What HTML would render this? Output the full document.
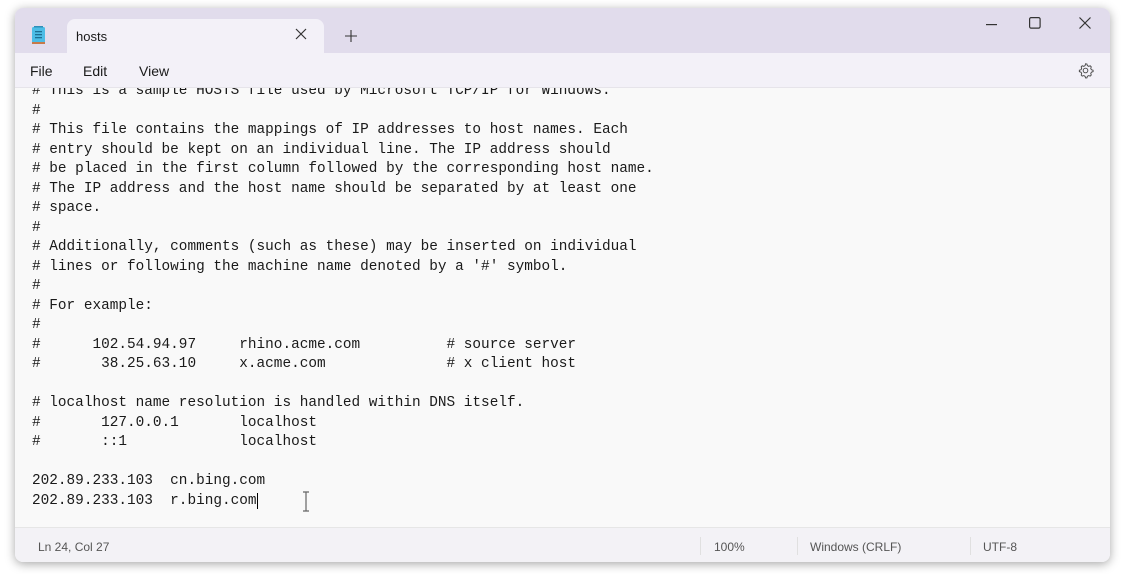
<!DOCTYPE html>
<html><head><meta charset="utf-8"><style>
*{margin:0;padding:0;box-sizing:border-box}
body{width:1121px;height:574px;background:#fff;position:relative;overflow:hidden;font-family:"Liberation Sans",sans-serif}
.win{position:absolute;left:15px;top:8px;width:1095px;height:554px;border-radius:8px;overflow:hidden;box-shadow:0 2px 10px rgba(0,0,0,.35);background:#f9f9f9}
.title{position:absolute;left:0;top:0;width:100%;height:45px;background:#e1dcec}
.tab{position:absolute;left:52px;top:11px;width:257px;height:35px;background:#f3f1f8;border-radius:8px 8px 0 0}
.tab span{position:absolute;left:9px;top:10px;font-size:13px;color:#1a1a1a}
.menu{position:absolute;left:0;top:45px;width:100%;height:35px;background:#f3f1f8;border-bottom:1px solid #e6e4ea}
.menu span{position:absolute;top:10px;font-size:14px;color:#1a1a1a}
.text{position:absolute;left:0;top:80px;width:100%;height:439px;overflow:hidden}
pre{position:absolute;left:17px;top:-6px;font-family:"Liberation Mono",monospace;font-size:14.4px;line-height:19.5px;color:#1a1a1a}
.status{position:absolute;left:0;top:519px;width:100%;height:35px;background:#f3f2f6;border-top:1px solid #e6e6e6;font-size:12px;color:#555}
.status span{position:absolute;top:12px}
.sep{position:absolute;top:9px;width:1px;height:18px;background:#e0e0e0}
</style></head><body>
<div class="win">
<div class="title">
<svg style="position:absolute;left:17px;top:18px" width="14" height="19" viewBox="0 0 14 19"><rect x="0" y="1" width="13" height="16" rx="1.5" fill="#4cbde6"/><rect x="0" y="16" width="13" height="2" fill="#c77a4a"/><rect x="3" y="5" width="7" height="1.3" fill="#1d6f94"/><rect x="3" y="8" width="7" height="1.3" fill="#1d6f94"/><rect x="3" y="11" width="7" height="1.3" fill="#1d6f94"/><rect x="2" y="0" width="9" height="1.5" fill="#2d8fb8"/></svg>
<div class="tab"><span>hosts</span>
<svg style="position:absolute;left:228px;top:9px" width="12" height="12" viewBox="0 0 12 12"><path d="M1 1L11 11M11 1L1 11" stroke="#333" stroke-width="1.2"/></svg></div>
<svg style="position:absolute;left:330px;top:22px" width="12" height="12" viewBox="0 0 12 12"><path d="M6 0V12M0 6H12" stroke="#333" stroke-width="1.1"/></svg>
<svg style="position:absolute;left:971px;top:16px" width="12" height="2"><rect width="11" height="1.2" fill="#333"/></svg>
<svg style="position:absolute;left:1014px;top:9px" width="12" height="12"><rect x=".6" y=".6" width="10.5" height="10.5" rx="1.5" fill="none" stroke="#333" stroke-width="1.2"/></svg>
<svg style="position:absolute;left:1064px;top:9px" width="12" height="12" viewBox="0 0 12 12"><path d="M.5 .5L11.5 11.5M11.5 .5L.5 11.5" stroke="#333" stroke-width="1.2"/></svg>
</div>
<div class="menu"><span style="left:15px">File</span><span style="left:68px">Edit</span><span style="left:124px">View</span>
<svg style="position:absolute;left:1062px;top:9px" width="17" height="17" viewBox="0 0 24 24"><path d="M12 2.5l2 .3.6 2.3 1.8 1 2.3-.7 1.4 1.5-.7 2.3 1 1.8 2.3.6v2.1l-2.3.6-1 1.8.7 2.3-1.4 1.5-2.3-.7-1.8 1-.6 2.3h-2l-.6-2.3-1.8-1-2.3.7-1.4-1.5.7-2.3-1-1.8-2.3-.6v-2.1l2.3-.6 1-1.8-.7-2.3 1.4-1.5 2.3.7 1.8-1 .6-2.3z" fill="none" stroke="#444" stroke-width="1.3"/><circle cx="12" cy="12" r="3.3" fill="none" stroke="#444" stroke-width="1.3"/></svg></div>
<div class="text"><pre># This is a sample HOSTS file used by Microsoft TCP/IP for Windows.
#
# This file contains the mappings of IP addresses to host names. Each
# entry should be kept on an individual line. The IP address should
# be placed in the first column followed by the corresponding host name.
# The IP address and the host name should be separated by at least one
# space.
#
# Additionally, comments (such as these) may be inserted on individual
# lines or following the machine name denoted by a '#' symbol.
#
# For example:
#
#      102.54.94.97     rhino.acme.com          # source server
#       38.25.63.10     x.acme.com              # x client host

# localhost name resolution is handled within DNS itself.
#       127.0.0.1       localhost
#       ::1             localhost

202.89.233.103  cn.bing.com
202.89.233.103  r.bing.com<span style="border-left:1px solid #000;margin-left:0"></span></pre>
<svg style="position:absolute;left:287px;top:403px" width="8" height="22"><path d="M1 1h6M4 1v19M1 20h6" stroke="#666" stroke-width="1.2" fill="none"/></svg>
</div>
<div class="status"><span style="left:23px">Ln 24, Col 27</span>
<div class="sep" style="left:685px"></div><span style="left:699px">100%</span>
<div class="sep" style="left:782px"></div><span style="left:795px">Windows (CRLF)</span>
<div class="sep" style="left:955px"></div><span style="left:968px">UTF-8</span></div>
</div>
</body></html>
